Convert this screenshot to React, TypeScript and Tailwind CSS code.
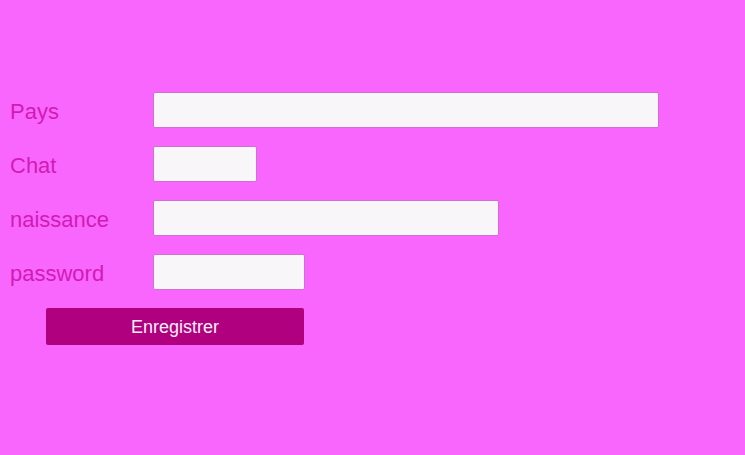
import React, { type FC } from "react";

const fields = [
  { label: "Pays", width: "w-[506px]", type: "text" },
  { label: "Chat", width: "w-[104px]", type: "text" },
  { label: "naissance", width: "w-[346px]", type: "text" },
  { label: "password", width: "w-[152px]", type: "password" },
];

const App: FC = () => (
  <div className="min-h-[455px] w-full bg-[#f966fd] pt-[92px] pl-[10px] font-['Liberation_Sans',Arial,sans-serif]">
    <form className="flex flex-col gap-[18px]">
      {fields.map((f) => (
        <div key={f.label} className="flex h-9 items-center">
          <label className="w-[143px] pt-[3px] text-[22px] leading-none text-[#d21ab6]">{f.label}</label>
          <input
            type={f.type}
            className={`${f.width} h-9 rounded-[2px] border border-[#cf6fd0] bg-[#f8f6f8] outline-none`}
          />
        </div>
      ))}
      <div className="pl-[36px]">
        <button
          type="button"
          className="h-[37px] w-[258px] rounded-[2px] bg-[#b0007f] text-[18px] leading-none text-[#f8eef6]"
        >
          Enregistrer
        </button>
      </div>
    </form>
  </div>
);

export default App;
